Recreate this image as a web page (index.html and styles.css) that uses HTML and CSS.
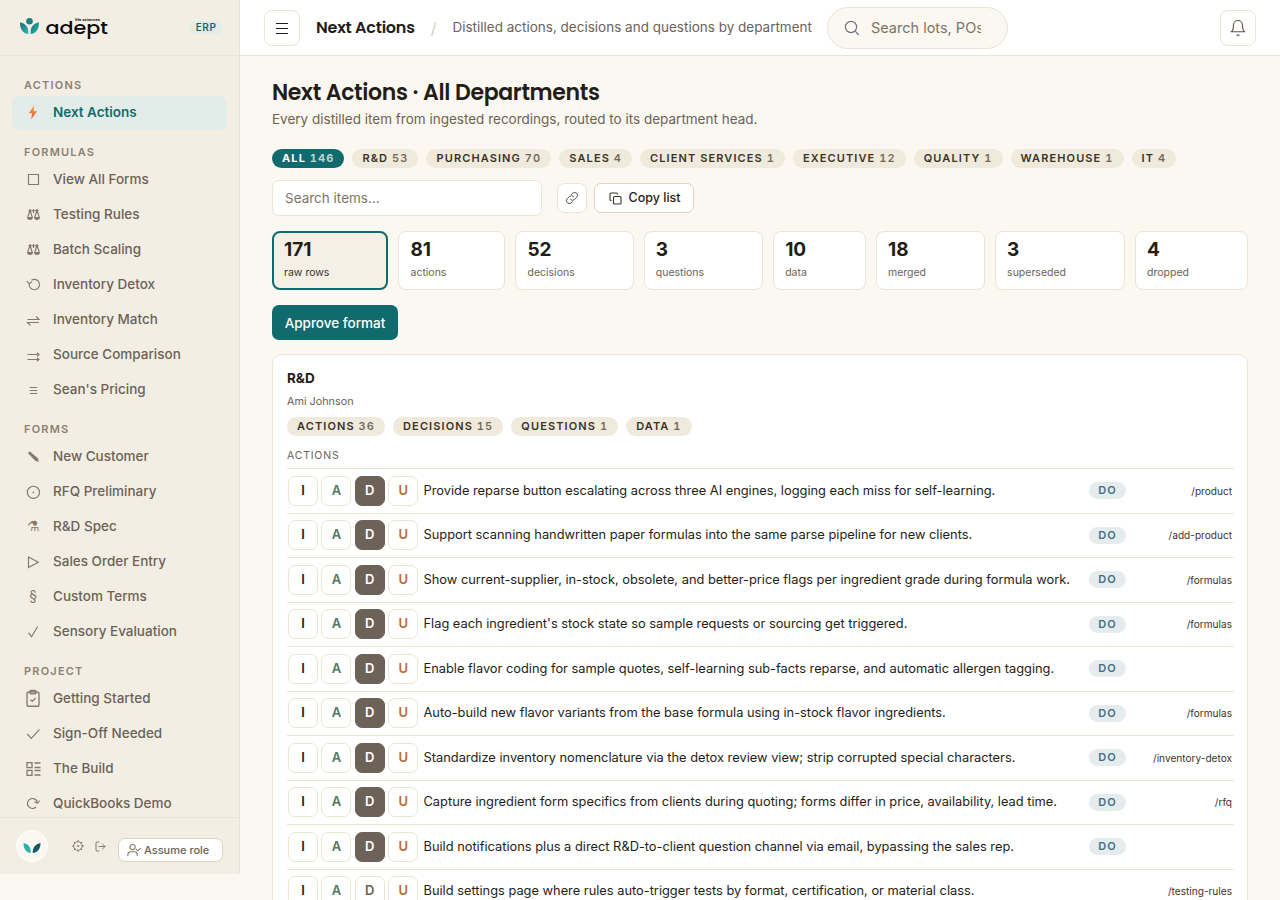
FILE: index.html
```html
<!DOCTYPE html>
<html lang="en">
<head>
<meta charset="utf-8">
<title>Next Actions</title>
<link rel="stylesheet" href="styles.css">
</head>
<body>
<div class="app">
  <aside class="sidebar">
    <div class="brand">
      <svg class="logo" width="90" height="24" viewBox="0 0 90 24">
        <defs><linearGradient id="teal" x1="0" y1="0" x2="1" y2="1"><stop offset="0" stop-color="#146b74"/><stop offset="1" stop-color="#35bdb8"/></linearGradient></defs>
        <circle cx="9.500" cy="5.200" r="3.300" fill="#1d7f86"/>
        <path d="M0 6.500C5 7 9 10.500 8.300 18C3 17.500 0 13.500 0 6.500Z" fill="url(#teal)"/>
        <path d="M19 6.500C14 7 10 10.500 10.700 18C16 17.500 19 13.500 19 6.500Z" fill="url(#teal)"/>
        <text class="logo-word" x="25.500" y="17.700" textLength="62.500" lengthAdjust="spacingAndGlyphs">adept</text>
        <text class="logo-sub" x="55" y="5.200" textLength="25" lengthAdjust="spacingAndGlyphs">life sciences</text>
      </svg>
      <span class="erp">ERP</span>
    </div>
    <nav class="nav">
      <div class="nav-label">ACTIONS</div>
      <a class="nav-item active"><span class="ico"><svg width="16" height="16" viewBox="0 0 16 16"><defs><linearGradient id="bolt" x1="0" y1="0" x2="0" y2="1"><stop offset="0" stop-color="#f9a13a"/><stop offset="1" stop-color="#ee5350"/></linearGradient></defs><path d="M9 1.500L3.800 9.300H7L6.300 15.300L12.200 7.300H8.700Z" fill="url(#bolt)"/></svg></span>Next Actions</a>
      <div class="nav-label">FORMULAS</div>
      <a class="nav-item"><span class="ico"><svg class="thin" width="16" height="16" viewBox="0 0 16 16"><path d="M3.500 3.500h10v10h-10z"/></svg></span>View All Forms</a>
      <a class="nav-item"><span class="ico"><svg class="thin" width="16" height="16" viewBox="0 0 16 16"><path d="M8.500 3v4M3.500 4.700h10M5 4.500L2.800 11M5 4.500L7.200 11M12 4.500L9.800 11M12 4.500L14.200 11M5 3.500v1M12 3.500v1"/><path class="solid" d="M2 11h6q0 3-3 3t-3-3zM9 11h6q0 3-3 3t-3-3zM4 3.500h2v3h-2zM11 3.500h2v3h-2z"/></svg></span>Testing Rules</a>
      <a class="nav-item"><span class="ico"><svg class="thin" width="16" height="16" viewBox="0 0 16 16"><path d="M8.500 3v4M3.500 4.700h10M5 4.500L2.800 11M5 4.500L7.200 11M12 4.500L9.800 11M12 4.500L14.200 11M5 3.500v1M12 3.500v1"/><path class="solid" d="M2 11h6q0 3-3 3t-3-3zM9 11h6q0 3-3 3t-3-3zM4 3.500h2v3h-2zM11 3.500h2v3h-2z"/></svg></span>Batch Scaling</a>
      <a class="nav-item"><span class="ico"><svg class="thin" width="16" height="16" viewBox="0 0 16 16"><path d="M4.200 7.800A5.200 5.200 0 1 0 6.500 4.200M1.800 5l2.300 2.800L7 5.800"/></svg></span>Inventory Detox</a>
      <a class="nav-item"><span class="ico"><svg class="thin" width="16" height="16" viewBox="0 0 16 16"><path d="M2.500 8.500h11.500L11 5.500M14 11.500H2.500l3 3"/></svg></span>Inventory Match</a>
      <a class="nav-item"><span class="ico"><svg class="thin" width="16" height="16" viewBox="0 0 16 16"><path d="M2.500 8.500H14M2.500 13.500H14M12 6.800l2 1.700-2 1.700M12 11.800l2 1.700-2 1.700"/></svg></span>Source Comparison</a>
      <a class="nav-item"><span class="ico"><svg class="thin" width="16" height="16" viewBox="0 0 16 16"><path d="M4.700 6.500h7.500M4.700 9.500h7.500M4.700 12.500h7.500"/></svg></span>Sean's Pricing</a>
      <div class="nav-label">FORMS</div>
      <a class="nav-item"><span class="ico"><svg class="thin" width="16" height="16" viewBox="0 0 16 16"><path class="solid" d="M2.800 5L5 3.400L12.800 10.200L13.800 14L10.200 12.800Z"/></svg></span>New Customer</a>
      <a class="nav-item"><span class="ico"><svg class="thin" width="16" height="16" viewBox="0 0 16 16"><circle cx="8.400" cy="9.300" r="6.100"/><circle class="solid" cx="8.400" cy="9.300" r=".9"/></svg></span>RFQ Preliminary</a>
      <a class="nav-item"><span class="ico">⚗</span>R&amp;D Spec</a>
      <a class="nav-item"><span class="ico"><svg class="thin" width="16" height="16" viewBox="0 0 16 16"><path d="M3.500 4v10.500l9.800-5.300z"/></svg></span>Sales Order Entry</a>
      <a class="nav-item"><span class="ico">§</span>Custom Terms</a>
      <a class="nav-item"><span class="ico"><svg class="thin" width="16" height="16" viewBox="0 0 16 16"><path d="M3.500 9.700l3 4L12.700 3.500"/></svg></span>Sensory Evaluation</a>
      <div class="nav-label">PROJECT</div>
      <a class="nav-item"><span class="ico"><svg class="line" width="18" height="18" viewBox="0 0 24 24"><rect x="4" y="4" width="16" height="19" rx="2.500"/><rect x="8" y="2" width="8" height="4.500" rx="1.500"/><path d="M9 14.500l2 2 4-4"/></svg></span>Getting Started</a>
      <a class="nav-item"><span class="ico"><svg class="thin" width="16" height="16" viewBox="0 0 16 16"><path d="M2.300 9l4 4.300 8.200-9"/></svg></span>Sign-Off Needed</a>
      <a class="nav-item"><span class="ico"><svg class="thin bold" width="16" height="16" viewBox="0 0 16 16"><path d="M2 2.700h5v5H2zM2 10.300h5v5H2zM9.500 3h6M9.500 7.500h6M9.500 10.500h6M9.500 15h6"/></svg></span>The Build</a>
      <a class="nav-item"><span class="ico"><svg class="thin" width="16" height="16" viewBox="0 0 16 16"><path d="M12.200 7A5 5 0 1 0 11 12M14.500 5.500l-2 2.700-3-1.500"/></svg></span>QuickBooks Demo</a>
    </nav>
    <div class="side-foot">
      <span class="avatar"><svg width="18" height="11" viewBox="0 0 18 11"><path d="M.5 0C5 .8 8 4 7.800 10C3 9.500.5 6 .5 0Z" fill="#2fb0ab"/><path d="M17.500 0C13 .8 9.500 4 9.700 10C14.500 9.500 17.500 6 17.500 0Z" fill="#14566a"/></svg></span>
      <svg class="line gear" width="12" height="12" viewBox="0 0 12 12"><circle cx="6" cy="6" r="4.300"/><circle cx="6" cy="6" r=".6"/><path d="M6 .5v1M6 10.500v1M.5 6h1M10.500 6h1M2.100 2.100l.8.8M9.100 9.100l.8.8M2.100 9.900l.8-.8M9.100 2.900l.8-.8"/></svg>
      <svg class="line exit" width="11" height="11" viewBox="0 0 11 11"><path d="M4 1H2q-1 0-1 1v7q0 1 1 1h2M4 5.500h6M7.500 3l2.500 2.500L7.500 8"/></svg>
      <button class="assume"><svg class="line" width="14" height="14" viewBox="0 0 24 24"><circle cx="9.500" cy="7" r="4.500"/><path d="M1.500 22v-2q0-5 5-5h6q5 0 5 5v2M16 11l2.500 2.500L23 9"/></svg>Assume role</button>
    </div>
  </aside>
  <div class="content">
    <header class="topbar">
      <button class="square"><svg width="12" height="12" viewBox="0 0 12 12"><path d="M0 1.500h12M0 6.500h12M0 11.500h12" stroke="#231d18" stroke-width="1.100"/></svg></button>
      <span class="crumb">Next Actions</span>
      <span class="slash">/</span>
      <span class="desc">Distilled actions, decisions and questions by department</span>
      <label class="search"><svg width="16" height="16" viewBox="0 0 16 16" fill="none" stroke="#6b7280" stroke-width="1.200" stroke-linecap="round"><circle cx="7" cy="7" r="5.600"/><path d="M11.200 11.200L14.300 14.500"/></svg><span class="search-text">Search lots, POs</span></label>
      <button class="bell"><svg width="18" height="18" viewBox="0 0 24 24" fill="none" stroke="#5d5449" stroke-width="1.500" stroke-linecap="round" stroke-linejoin="round"><path d="M18 8A6 6 0 0 0 6 8c0 7-2 8.500-3 9h18c-1-.5-3-2-3-9M10.500 21.500h3"/></svg></button>
    </header>
    <main class="page">
      <h1>Next Actions · All Departments</h1>
      <p class="lead">Every distilled item from ingested recordings, routed to its department head.</p>
      <div class="chips">
        <span class="chip on">ALL <i>146</i></span><span class="chip">R&amp;D <i>53</i></span><span class="chip">PURCHASING <i>70</i></span><span class="chip">SALES <i>4</i></span><span class="chip">CLIENT SERVICES <i>1</i></span><span class="chip">EXECUTIVE <i>12</i></span><span class="chip">QUALITY <i>1</i></span><span class="chip">WAREHOUSE <i>1</i></span><span class="chip">IT <i>4</i></span>
      </div>
      <div class="tools">
        <div class="filter">Search items...</div>
        <button class="link"><svg width="14" height="14" viewBox="0 0 24 24" fill="none" stroke="#5d5449" stroke-width="1.700" stroke-linecap="round"><path d="M9.500 14.500a5 5 0 0 0 7 0l4-4a5 5 0 0 0-7-7l-2.500 2.500M14.500 9.500a5 5 0 0 0-7 0l-4 4a5 5 0 0 0 7 7l2.500-2.500"/></svg></button>
        <button class="copy"><svg width="13" height="13" viewBox="0 0 13 13" fill="none" stroke="#3a332b" stroke-width="1.100"><rect x="4.500" y="4.500" width="7.500" height="7.500" rx="1"/><path d="M2.500 8.500H2q-1 0-1-1V2q0-1 1-1h5.500q1 0 1 1v.5"/></svg>Copy list</button>
      </div>
      <div class="stats">
        <div class="stat sel"><b>171</b><span>raw rows</span></div>
        <div class="stat"><b>81</b><span>actions</span></div>
        <div class="stat"><b>52</b><span>decisions</span></div>
        <div class="stat"><b>3</b><span>questions</span></div>
        <div class="stat"><b>10</b><span>data</span></div>
        <div class="stat"><b>18</b><span>merged</span></div>
        <div class="stat"><b>3</b><span>superseded</span></div>
        <div class="stat"><b>4</b><span>dropped</span></div>
      </div>
      <button class="approve">Approve format</button>
      <section class="card">
        <h2>R&amp;D</h2>
        <div class="owner">Ami Johnson</div>
        <div class="chips"><span class="chip">ACTIONS <i>36</i></span><span class="chip">DECISIONS <i>15</i></span><span class="chip">QUESTIONS <i>1</i></span><span class="chip">DATA <i>1</i></span></div>
        <div class="group">ACTIONS</div>
        <div class="row"><div class="votes"><b>I</b><b class="a">A</b><b class="d">D</b><b class="u">U</b></div><p>Provide reparse button escalating across three AI engines, logging each miss for self-learning.</p><span class="do">DO</span><span class="path">/product</span></div>
        <div class="row"><div class="votes"><b>I</b><b class="a">A</b><b class="d">D</b><b class="u">U</b></div><p>Support scanning handwritten paper formulas into the same parse pipeline for new clients.</p><span class="do">DO</span><span class="path">/add-product</span></div>
        <div class="row"><div class="votes"><b>I</b><b class="a">A</b><b class="d">D</b><b class="u">U</b></div><p>Show current-supplier, in-stock, obsolete, and better-price flags per ingredient grade during formula work.</p><span class="do">DO</span><span class="path">/formulas</span></div>
        <div class="row"><div class="votes"><b>I</b><b class="a">A</b><b class="d">D</b><b class="u">U</b></div><p>Flag each ingredient's stock state so sample requests or sourcing get triggered.</p><span class="do">DO</span><span class="path">/formulas</span></div>
        <div class="row"><div class="votes"><b>I</b><b class="a">A</b><b class="d">D</b><b class="u">U</b></div><p>Enable flavor coding for sample quotes, self-learning sub-facts reparse, and automatic allergen tagging.</p><span class="do">DO</span><span class="path"></span></div>
        <div class="row"><div class="votes"><b>I</b><b class="a">A</b><b class="d">D</b><b class="u">U</b></div><p>Auto-build new flavor variants from the base formula using in-stock flavor ingredients.</p><span class="do">DO</span><span class="path">/formulas</span></div>
        <div class="row"><div class="votes"><b>I</b><b class="a">A</b><b class="d">D</b><b class="u">U</b></div><p>Standardize inventory nomenclature via the detox review view; strip corrupted special characters.</p><span class="do">DO</span><span class="path">/inventory-detox</span></div>
        <div class="row"><div class="votes"><b>I</b><b class="a">A</b><b class="d">D</b><b class="u">U</b></div><p>Capture ingredient form specifics from clients during quoting; forms differ in price, availability, lead time.</p><span class="do">DO</span><span class="path">/rfq</span></div>
        <div class="row"><div class="votes"><b>I</b><b class="a">A</b><b class="d">D</b><b class="u">U</b></div><p>Build notifications plus a direct R&amp;D-to-client question channel via email, bypassing the sales rep.</p><span class="do">DO</span><span class="path"></span></div>
        <div class="row"><div class="votes"><b>I</b><b class="a">A</b><b class="d off">D</b><b class="u">U</b></div><p>Build settings page where rules auto-trigger tests by format, certification, or material class.</p><span></span><span class="path">/testing-rules</span></div>
      </section>
    </main>
  </div>
</div>
</body>
</html>
```
FILE: styles.css
```css
* { box-sizing: border-box; }
body { margin: 0; background: #fbf8f1; color: #231d18; font: 13.500px/20px Inter, sans-serif; }
button { font: inherit; color: inherit; padding: 0; margin: 0; }
.app { display: flex; height: 900px; overflow: hidden; }

.sidebar { width: 240px; height: 874px; flex: none; display: flex; flex-direction: column; background: #f3eee3; border-right: 1px solid #e9e3d5; }
.brand { height: 56px; flex: none; display: flex; align-items: center; justify-content: space-between; padding: 0 16px 0 20px; border-bottom: 1px solid #e9e3d5; }
.logo { margin-top: 1px; overflow: visible; }
.logo-word { font: 500 18px Poppins, Lato, sans-serif; fill: #0b0b0b; }
.logo-sub { font: 700 3.500px Inter, sans-serif; fill: #222; }
.erp { height: 13px; padding: 0 6.500px 0 7px; border-radius: 7px; background: #e2edea; color: #116b6e; font-size: 10px; font-weight: 600; line-height: 13px; letter-spacing: .6px; }
.nav { flex: 1; overflow: hidden; padding: 8px 12px 0; }
.nav-label { height: 32px; padding: 12px 12px 0; color: #8c8174; font-size: 11px; font-weight: 600; line-height: 18px; letter-spacing: 1.200px; }
.nav-item { display: flex; align-items: center; gap: 11px; height: 34px; margin-bottom: 1px; padding: 0 12px 2px; border-radius: 7px; color: #6c6257; font-weight: 500; }
.nav-item.active { background: #e2edea; color: #116b6e; font-weight: 600; }
.ico { width: 18px; height: 18px; display: flex; align-items: center; justify-content: center; color: #85796b; font-size: 14px; font-weight: 400; }
.line, .thin { fill: none; stroke: #85796b; stroke-linecap: round; stroke-linejoin: round; }
.thin { stroke-width: 1.150; stroke-linecap: butt; stroke-linejoin: miter; }
.thin.bold { stroke-width: 1.300; }
.solid { fill: #85796b; stroke: none; }
.ico svg.line { stroke-width: 1.800; }
.side-foot { height: 57px; flex: none; display: flex; align-items: center; padding: 0 16px; border-top: 1px solid #e9e3d5; }
.avatar { width: 32px; height: 32px; display: flex; align-items: center; justify-content: center; padding-top: 4px; border: 1px solid #fff; border-radius: 50%; background: #fbf8f1; }
.gear { margin-left: 24px; }
.exit { margin-left: 11px; }
.assume { display: flex; align-items: center; gap: 3px; width: 105px; height: 24px; margin: 8px 0 0 12px; padding-left: 8px; border: 1px solid #ddd3c0; border-radius: 7px; background: #fff; color: #6c6257; font-size: 11px; font-weight: 500; white-space: nowrap; }
.assume svg { stroke-width: 1.800; }

.content { flex: 1; min-width: 0; }
.topbar { height: 56px; display: flex; align-items: center; padding: 0 24px; background: #fff; border-bottom: 1px solid #ece5d7; }
.square, .bell, .link { display: flex; align-items: center; justify-content: center; width: 36px; height: 36px; border: 1px solid #ece5d7; border-radius: 8px; background: #fff; }
.crumb { margin-left: 16px; font: 600 16px/24px Poppins, sans-serif; letter-spacing: -.240px; }
.slash { margin-left: 16px; color: #d9cfbf; font-size: 16px; }
.desc { margin-left: 16px; padding-bottom: 1px; color: #6c6257; white-space: nowrap; }
.search { display: flex; align-items: center; gap: 11px; width: 181px; height: 42px; margin-left: 15px; padding: 0 26px 0 16px; border: 1px solid #ece5d7; border-radius: 21px; background: #fbf8f1; color: #7d7468; font-size: 14.500px; }
.search svg { flex: none; }
.search-text { width: 111px; overflow: hidden; white-space: nowrap; }
.bell { margin-left: auto; }

.page { padding: 21px 32px 0; }
h1 { margin: 0; font: 600 22px/32px Poppins, sans-serif; letter-spacing: -.330px; }
.lead { margin: 0; color: #6c6257; }
.chips { display: flex; gap: 8px; }
.page > .chips { margin-top: 20px; }
.chip { height: 19px; padding: 0 10px; border-radius: 10px; background: #f0eadc; color: #3b332a; font-size: 11px; font-weight: 600; line-height: 19px; letter-spacing: 1.110px; white-space: nowrap; }
.chip i { font-style: normal; font-variant-numeric: tabular-nums; opacity: .7; }
.chip.on { background: #116b6e; color: #fff; font-weight: 700; }
.tools { display: flex; align-items: center; margin-top: 12px; }
.filter { width: 270px; height: 36px; padding: 0 12px; border: 1px solid #ece5d7; border-radius: 7px; background: #fff; color: #7d7468; line-height: 34px; }
.link { width: 30px; height: 30px; margin-left: 15px; }
.copy { display: flex; align-items: center; gap: 7px; height: 30px; width: 100px; margin-left: 7px; padding-left: 13.500px; border: 1px solid #ddd3c0; border-radius: 7px; background: #fff; font-size: 12.500px; font-weight: 500; white-space: nowrap; }
.stats { display: flex; gap: 10px; margin-top: 15px; }
.stat { flex: 1 1 auto; height: 59px; padding: 6px 11px; border: 1px solid #ece5d7; border-radius: 8px; background: #fff; }
.stat.sel { padding: 5px 10px; border: 2px solid #116b6e; background: #f5f0e5; }
.stat b { display: block; font-size: 19px; font-weight: 700; line-height: 24px; }
.stat span { display: block; margin-top: 3px; color: #6c6257; font-size: 10.500px; line-height: 16px; }
.stat.sel span { color: #3b332a; }
.approve { display: block; height: 35px; width: 126px; margin-top: 15px; padding-top: 1px; border: 0; border-radius: 7px; background: #116b6e; color: #fff; font-weight: 500; }
.card { height: 700px; margin-top: 14px; padding: 13px 13px 0 14px; border: 1px solid #ece5d7; border-radius: 10px; background: #fff; }
h2 { margin: 0; font-size: 13.500px; font-weight: 700; line-height: 20px; }
.owner { margin: 6px 0 7px; color: #6c6257; font-size: 10.800px; line-height: 16px; }
.group { height: 33px; padding-top: 12px; border-bottom: 1px solid #ece5d7; color: #6c6257; font-size: 10.500px; line-height: 16px; letter-spacing: .8px; }
.row { display: grid; grid-template-columns: 135.500px 1fr 38px 105px; align-items: center; height: 44.500px; padding: 0 2px 0 1px; border-bottom: 1px solid #ece5d7; }
.row p { margin: 0; font-size: 12.830px; white-space: nowrap; }
.votes { display: flex; gap: 3.400px; }
.votes b { width: 30px; height: 30px; border: 1px solid #ece5d7; border-radius: 7px; font-size: 13px; font-weight: 600; line-height: 27px; text-align: center; }
.votes .a { color: #4d7a64; }
.votes .d { border-color: #6c6257; background: #6c6257; color: #fff; }
.votes .off { border-color: #ece5d7; background: #fff; color: #6c6257; }
.votes .u { color: #b5703a; }
.do { width: 37px; height: 17px; border-radius: 9px; background: #e6ecee; color: #3f7085; font-size: 11px; font-weight: 600; line-height: 17px; letter-spacing: 1px; text-align: center; }
.path { color: #3b332a; font-size: 10.100px; text-align: right; }
```
